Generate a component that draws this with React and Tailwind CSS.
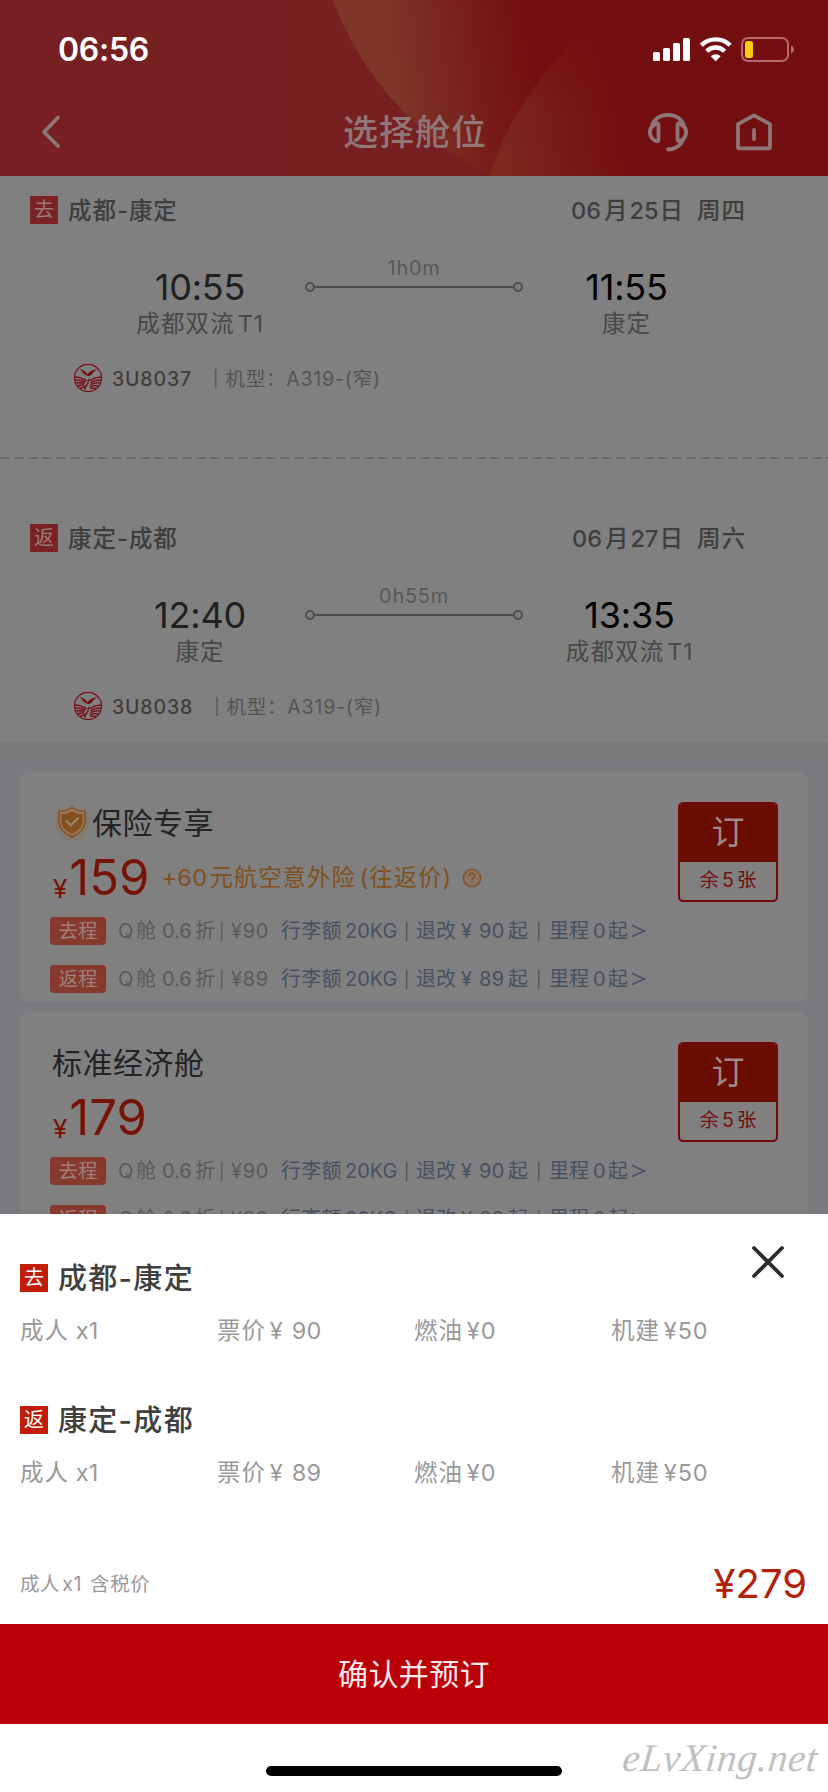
import React from 'react';

const flights = [
    {
        tag: '去', route: ['成都', '康定'], month: '06', day: '25', week: '周四', duration: '1h0m',
        dep: { time: '10:55', city: '成都双流', terminal: 'T1' },
        arr: { time: '11:55', city: '康定' },
        flightNo: '3U8037', plane: 'A319-(窄)',
    },
    {
        tag: '返', route: ['康定', '成都'], month: '06', day: '27', week: '周六', duration: '0h55m',
        dep: { time: '12:40', city: '康定' },
        arr: { time: '13:35', city: '成都双流', terminal: 'T1' },
        flightNo: '3U8038', plane: 'A319-(窄)',
    },
];

const cabins = [
    { name: '保险专享', price: '159', insured: true },
    { name: '标准经济舱', price: '179', insured: false },
];

const legs = [
    { tag: '去程', price: '90' },
    { tag: '返程', price: '89' },
];

const bill = [
    { tag: '去', route: ['成都', '康定'], fare: '90' },
    { tag: '返', route: ['康定', '成都'], fare: '89' },
];

function StatusBar() {
    return (
        <div className="flex h-[88px] items-center justify-between pt-3 pl-[58px] pr-[33px] text-white">
            <span className="text-[32px] leading-none font-semibold tracking-[-0.300px]">06:56</span>
            <svg width="142" height="26" viewBox="0 0 142 26" fill="none">
                <g fill="#fff">
                    <rect x="0" y="15" width="7" height="9" rx="1.5" />
                    <rect x="10" y="11" width="7" height="13" rx="1.5" />
                    <rect x="20" y="6" width="7" height="18" rx="1.5" />
                    <rect x="30" y="1" width="7" height="23" rx="1.5" />
                </g>
                <g stroke="#fff" strokeWidth="4.4">
                    <path d="M48.300 8.200a20.600 20.600 0 0 1 28.800 0" />
                    <path d="M53.800 14.200a12.600 12.600 0 0 1 17.800 0" />
                </g>
                <path d="M62.700 24.200l-4.900-5a7 7 0 0 1 9.800 0z" fill="#fff" />
                <rect x="89" y="1" width="46" height="23" rx="6" stroke="#b46a6c" strokeWidth="2" />
                <rect x="92" y="4" width="8" height="17" rx="2.500" fill="#ffcc15" />
                <path d="M138 8.500c2 .8 3 2.300 3 4s-1 3.200-3 4z" fill="#b46a6c" />
            </svg>
        </div>
    );
}

function HeaderArt() {
    return (
        <svg className="absolute inset-0" width="828" height="176" viewBox="0 0 828 176">
            <defs>
                <linearGradient id="base" x1="0" x2="828" y1="0" y2="0" gradientUnits="userSpaceOnUse">
                    <stop offset="0" stopColor="#762023" />
                    <stop offset="0.55" stopColor="#762022" />
                    <stop offset="0.72" stopColor="#740f11" />
                    <stop offset="1" stopColor="#740f11" />
                </linearGradient>
                <linearGradient id="glow" x1="390" x2="530" y1="70" y2="50" gradientUnits="userSpaceOnUse">
                    <stop offset="0" stopColor="#7e3628" />
                    <stop offset="0.25" stopColor="#7b2c22" />
                    <stop offset="1" stopColor="#740f11" />
                </linearGradient>
                <linearGradient id="leaf" x1="495" x2="625" y1="170" y2="150" gradientUnits="userSpaceOnUse">
                    <stop offset="0" stopColor="#7c2b20" />
                    <stop offset="0.5" stopColor="#781c18" />
                    <stop offset="1" stopColor="#740f11" />
                </linearGradient>
                <linearGradient id="fade" x1="0" x2="0" y1="10" y2="110" gradientUnits="userSpaceOnUse">
                    <stop offset="0" stopColor="#740f11" />
                    <stop offset="1" stopColor="#740f11" stopOpacity="0" />
                </linearGradient>
            </defs>
            <rect width="828" height="176" fill="url(#base)" />
            <path d="M333 0C350 46 378 88 414 122C440 146 465 163 490 176H828V0z" fill="url(#glow)" />
            <path d="M490 176C504 126 540 68 600 16V176z M600 16H828V176H600z" fill="url(#leaf)" />
            <path d="M490 176C504 126 540 68 600 16H660V176z" fill="url(#fade)" />
        </svg>
    );
}

function NavBar() {
    return (
        <div className="flex h-[88px] items-center justify-between pl-10 pr-[55px] text-[#8f7677]">
            <svg width="24" height="36" viewBox="0 0 24 36" fill="none" stroke="currentColor" strokeWidth="3.600" strokeLinecap="round" strokeLinejoin="round">
                <path d="M18 3.500L4 18l14 14" />
            </svg>
            <h1 className="ml-[119px] text-[35px] leading-none font-medium tracking-[1px]">选择舱位</h1>
            <div className="flex items-center gap-[46px]">
                <svg width="42" height="40" viewBox="0 0 42 40" fill="none" stroke="currentColor" strokeWidth="3.800" strokeLinecap="round" strokeLinejoin="round">
                    <path d="M5 13.500C7 7 13.500 2.800 21 2.800s14 4.200 16 10.700" />
                    <path d="M8.300 12c1.900-1.400 3.200-1 3.200 1v14.500c0 2-1.500 2.300-3.400 1.200-3.500-2-5.300-5-5.300-8.400 0-3.300 2-6.300 5.500-8.300z" />
                    <path d="M33.700 12c-1.900-1.400-3.200-1-3.200 1v14.500c0 2 1.500 2.300 3.400 1.200 3.500-2 5.300-5 5.300-8.400 0-3.300-2-6.300-5.500-8.300z" />
                    <path d="M36.500 27c-2.500 6.200-8 10.200-15.500 10.500" />
                </svg>
                <svg width="38" height="40" viewBox="0 0 38 40" fill="none" stroke="currentColor" strokeWidth="3.800" strokeLinecap="round" strokeLinejoin="round">
                    <path d="M19 3.300l16 8.900v23.300a0.800 0.800 0 0 1-.8.800H3.800a0.800 0.800 0 0 1-.8-.8V12.200z" />
                    <path d="M19 18v9" />
                </svg>
            </div>
        </div>
    );
}

function AirlineLogo() {
    return (
        <svg width="30" height="30" viewBox="0 0 30 30" fill="none" stroke="#750d15">
            <circle cx="15" cy="15" r="13.600" strokeWidth="1.100" />
            <path d="M7 6c3.300.8 5.600 2.700 7.700 5.200C16.500 8.500 19.500 6.500 25 6.300c-3.300 1.300-4.700 2.600-6 4.700-.9 1.400-2.200 2.300-3.900 1.900C11.500 12.200 9 9.300 7 6z" fill="#750d15" stroke="none" />
            <g strokeWidth="1.400">
                <path d="M1.800 14c4 .2 8.200 1.300 11.700 3.700" />
                <path d="M2 17c4-.1 7.300.6 10.500 2" />
                <path d="M2.700 20c3.500-.5 6.300-.3 9 .4" />
                <path d="M4.200 23c2.500-.9 4.600-1.200 7.300-1" />
                <path d="M6.500 25.700c1.500-1 3.200-1.700 5-2" />
                <path d="M28.200 14c-4 .2-8 1.300-10.700 3.700" />
                <path d="M28 17c-4-.1-7.300.7-10.500 2.700" />
                <path d="M27.300 20c-3.500-.5-6.500 0-9.800 1.500" />
                <path d="M25.800 23c-3-.8-5.500-.4-9 .6" />
                <path d="M23.500 25.700c-2-.7-4-.9-6.500-.4" />
                <path d="M17 16c-3.500 1.500-.8 4-3 5.700-1.500 1.300-2.500 2.800-2 5" />
            </g>
        </svg>
    );
}

function Stop({ stop, className }) {
    return (
        <div className="flex flex-col items-center pt-[11px]">
            <span className={`text-[36px] leading-9 tracking-[-0.200px] ${className}`}>{stop.time}</span>
            <div className="mt-[5px] flex text-[23.500px] leading-7 tracking-[1.100px] text-[#484848]">
                <span>{stop.city}</span>
                {stop.terminal && <span className="ml-[3px] tracking-[0.600px]">{stop.terminal}</span>}
            </div>
        </div>
    );
}

function FlightSegment({ flight }) {
    return (
        <section>
            <div className="flex h-7 items-center pl-[30px] pr-[82px] text-[23.500px] leading-7 font-medium tracking-[1px] text-[#3e3e3e]">
                <span className="flex size-7 items-center justify-center bg-[#7a2123] text-[20px] font-normal tracking-normal text-[#99797a]">{flight.tag}</span>
                <span className="mt-[2px] ml-[10px]">{flight.route[0]}-{flight.route[1]}</span>
                <span className="mt-[2px] ml-auto flex">
                    <span className="tracking-normal">{flight.month}</span>
                    <span className="ml-[3px]">月</span>
                    <span className="ml-[1px] tracking-normal">{flight.day}</span>
                    <span className="ml-[1px]">日</span>
                    <span className="ml-[13px]">{flight.week}</span>
                </span>
            </div>
            <div className={`mt-[34px] grid pl-[95px] ${flight.arr.terminal ? 'grid-cols-[210px_218px_213px]' : 'grid-cols-[210px_218px_207px]'}`}>
                <Stop stop={flight.dep} className="text-[#202020]" />
                <div className="flex flex-col items-center">
                    <span className="text-[20px] leading-5 tracking-[0.700px] text-[#585858]">{flight.duration}</span>
                    <div className="mt-1 flex w-full items-center">
                        <i className="size-[10px] rounded-full border-2 border-[#4c4c4c]" />
                        <i className="h-[2px] flex-1 bg-[#4c4c4c]" />
                        <i className="size-[10px] rounded-full border-2 border-[#4c4c4c]" />
                    </div>
                </div>
                <Stop stop={flight.arr} className="text-black" />
            </div>
            <div className="mt-[25px] flex h-[30px] items-center pl-[73px] text-[19.500px] leading-[30px]">
                <AirlineLogo />
                <span className="mt-[2px] ml-[9px] font-medium tracking-[0.850px] text-[#3e3e3e]">{flight.flightNo}</span>
                <span className="ml-[21px] text-[16px] text-[#545454]">|</span>
                <span className="mt-[2px] ml-[7px] tracking-[0.800px] text-[#545454]">机型：{flight.plane}</span>
            </div>
        </section>
    );
}

function ShieldIcon() {
    return (
        <svg className="drop-shadow-[0_2px_3px_rgba(150,80,20,0.35)]" width="30" height="32" viewBox="0 0 30 32" fill="none">
            <path d="M15 1.500c3.800 2.600 8 3.800 13 3.900v10.100c0 6.500-4.500 11.500-13 15.500C6.500 27 2 22 2 15.500V5.400c5-.1 9.200-1.300 13-3.900z" fill="#9a7a5c" stroke="#85501f" strokeWidth="1.500" />
            <path d="M15 5c3.200 1.900 6.300 2.900 10.500 3.100v7.500c0 5-3.500 8.900-10.500 12.400C8 24.500 4.500 20.600 4.500 15.600V8.100C8.700 7.900 11.800 6.900 15 5z" fill="#85501f" />
            <path d="M9.500 15.200l4.300 4.100 7.400-7.300" stroke="#9c8570" strokeWidth="2" strokeLinecap="round" />
        </svg>
    );
}

function LegRow({ leg }) {
    return (
        <div className="flex h-7 items-center text-[20px] leading-7 whitespace-nowrap text-[#595a5d]">
            <span className="w-14 rounded-[4px] bg-[#87392d] text-center text-[19.500px] text-[#9d817c]">{leg.tag}</span>
            <span className="ml-[12px] w-[18px]">Q</span>
            <span className="w-[26px]">舱</span>
            <span className="w-[33px]">0.6</span>
            <span className="w-[24px]">折</span>
            <span className="w-[12px] text-[16px]">|</span>
            <span className="w-[50px] tracking-[0.700px]">¥{leg.price}</span>
            <div className="flex text-[#485060]">
                <span className="w-[64px] tracking-[0.200px]">行李额</span>
                <span className="w-[59px]">20KG</span>
                <span className="w-[12px] text-[16px]">|</span>
                <span className="w-[45px]">退改</span>
                <span className="w-[18px]">¥</span>
                <span className="w-[29px] tracking-[0.300px]">{leg.price}</span>
                <span className="w-[28px]">起</span>
                <span className="w-[13px] text-[16px]">|</span>
                <span className="w-[44px]">里程</span>
                <span className="w-[15px]">0</span>
                <span className="w-[22px]">起</span>
                <svg className="mt-[7px] ml-[1px]" width="15" height="14" viewBox="0 0 15 14" fill="none" stroke="currentColor" strokeWidth="1.600">
                    <path d="M1 1.500L13.500 7 1 12.500" />
                </svg>
            </div>
        </div>
    );
}

function CabinCard({ cabin }) {
    return (
        <div className="flex h-[230px] shrink-0 justify-between rounded-[10px] bg-[#808080] pt-[30px] pr-[30px] pl-[30px]">
            <div>
                <div className="flex h-10 items-center text-[30px] leading-10 tracking-[0.500px] text-[#232323]">
                    {cabin.insured && <span className="mr-[5px] ml-[7px]"><ShieldIcon /></span>}
                    <span className={cabin.insured ? 'mt-[1px]' : 'mt-[1px] ml-[2px]'}>{cabin.name}</span>
                </div>
                <div className="mt-[11px] flex h-12 items-center text-[#761307]">
                    <span className="mt-[24px] ml-[3px] text-[26px] leading-none">¥</span>
                    <span className="ml-[2px] text-[49px] leading-none tracking-normal">{cabin.price}</span>
                    {cabin.insured && (
                        <div className="mt-[2px] flex items-center pl-[12px] text-[23.500px] leading-8 tracking-[0.900px] text-[#7f5021]">
                            <span className="w-[48px] tracking-[0.300px]">+60</span>
                            <span>元航空意外险</span>
                            <span className="ml-[4px]">(往返价)</span>
                            <svg className="ml-[10px]" width="20" height="20" viewBox="0 0 20 20" fill="none" stroke="#7f5021" strokeWidth="1.400">
                                <circle cx="10" cy="10" r="8.600" fill="#8c7565" />
                                <path d="M7.200 8.200c0-3.900 5.600-3.700 5.600-.4 0 2-2.700 2-2.700 4.400M10.100 13.500v1.500" />
                            </svg>
                        </div>
                    )}
                </div>
                <div className="mt-4 flex flex-col gap-5">
                    {legs.map((leg) => <LegRow key={leg.tag} leg={leg} />)}
                </div>
            </div>
            <button className="flex size-[100px] flex-col overflow-hidden rounded-[5px] border-2 border-[#700907]">
                <span className="-mx-[2px] -mt-[2px] h-[60px] w-[100px] bg-[#680d00] text-[33px] leading-[61px] text-[#a18884]">订</span>
                <span className="flex h-[40px] w-full items-center justify-center gap-[3px] text-[19.500px] text-[#750d0e]">
                    <span>余</span><span>5</span><span>张</span>
                </span>
            </button>
        </div>
    );
}

function BillSection({ item }) {
    return (
        <div>
            <div className="flex h-7 items-center text-[29px] leading-7 font-medium tracking-[1.300px] text-[#404040]">
                <span className="flex size-7 items-center justify-center bg-[#c01c08] text-[20px] font-normal tracking-normal text-white">{item.tag}</span>
                <span className="mt-[2px] ml-[10px]">{item.route[0]}-{item.route[1]}</span>
            </div>
            <div className="mt-[25px] -mb-px grid grid-cols-4 text-[23.500px] leading-7 tracking-[0.900px] text-[#999]">
                <span>成人<span className="ml-[7px] tracking-normal">x1</span></span>
                <span>票价<span className="ml-1">¥</span><span className="ml-[8px] tracking-[0.300px]">{item.fare}</span></span>
                <span>燃油<span className="ml-1">¥0</span></span>
                <span>机建<span className="ml-1">¥50</span></span>
            </div>
        </div>
    );
}

export default function App() {
    return (
        <div className="flex h-[1792px] w-[828px] flex-col overflow-hidden bg-[#7a7a7e] font-['Inter','Noto_Sans_CJK_SC',sans-serif]">
            <header className="relative h-[176px] shrink-0">
                <HeaderArt />
                <div className="relative">
                    <StatusBar />
                    <NavBar />
                </div>
            </header>

            <main className="flex h-[1038px] shrink-0 flex-col overflow-hidden">
                <div className="h-[566px] shrink-0 bg-[#808080] pt-5">
                    <FlightSegment flight={flights[0]} />
                    <div className="mt-16 mb-[65px] h-[2px] bg-[repeating-linear-gradient(90deg,#6b6b6b_0_10px,#808080_10px_14px)]" />
                    <FlightSegment flight={flights[1]} />
                </div>
                <div className="h-4 shrink-0 bg-[#797979]" />
                <div className="flex flex-col gap-[10px] px-5 pt-[14px]">
                    {cabins.map((cabin) => <CabinCard key={cabin.name} cabin={cabin} />)}
                </div>
            </main>

            <div className="flex flex-1 flex-col bg-white">
                <div className="flex h-[410px] flex-col px-5">
                    <div className="flex h-[50px] justify-end pt-[31px] pr-[23px]">
                        <svg width="34" height="34" viewBox="0 0 34 34" fill="none" stroke="#2c2c2c" strokeWidth="3.800" strokeLinecap="round">
                            <path d="M3 3l28 28M31 3L3 31" />
                        </svg>
                    </div>
                    <div className="flex flex-col gap-[62px]">
                        {bill.map((item) => <BillSection key={item.tag} item={item} />)}
                    </div>
                    <div className="mt-[74px] flex h-[48px] items-center justify-between">
                        <span className="mt-[2px] text-[19.500px] tracking-[0.600px] text-[#999]">成人<span className="mx-[2px]">x1</span> 含税价</span>
                        <span className="mr-[1px] text-[40px] leading-none tracking-normal text-[#b3200c]">¥279</span>
                    </div>
                </div>
                <button className="h-[100px] bg-[#b90007] pt-px text-[30px] tracking-[0.400px] text-[#ffe9ea]">确认并预订</button>
                <div className="relative flex flex-1 items-end justify-center pb-4">
                    <div className="h-[10px] w-[296px] rounded-full bg-black" />
                    <span className="absolute right-[10px] bottom-[15px] -skew-x-6 font-['Liberation_Serif',serif] text-[39px] leading-none italic tracking-[0.700px] text-[#c0c0c0]">eLvXing.net</span>
                </div>
            </div>
        </div>
    );
}
